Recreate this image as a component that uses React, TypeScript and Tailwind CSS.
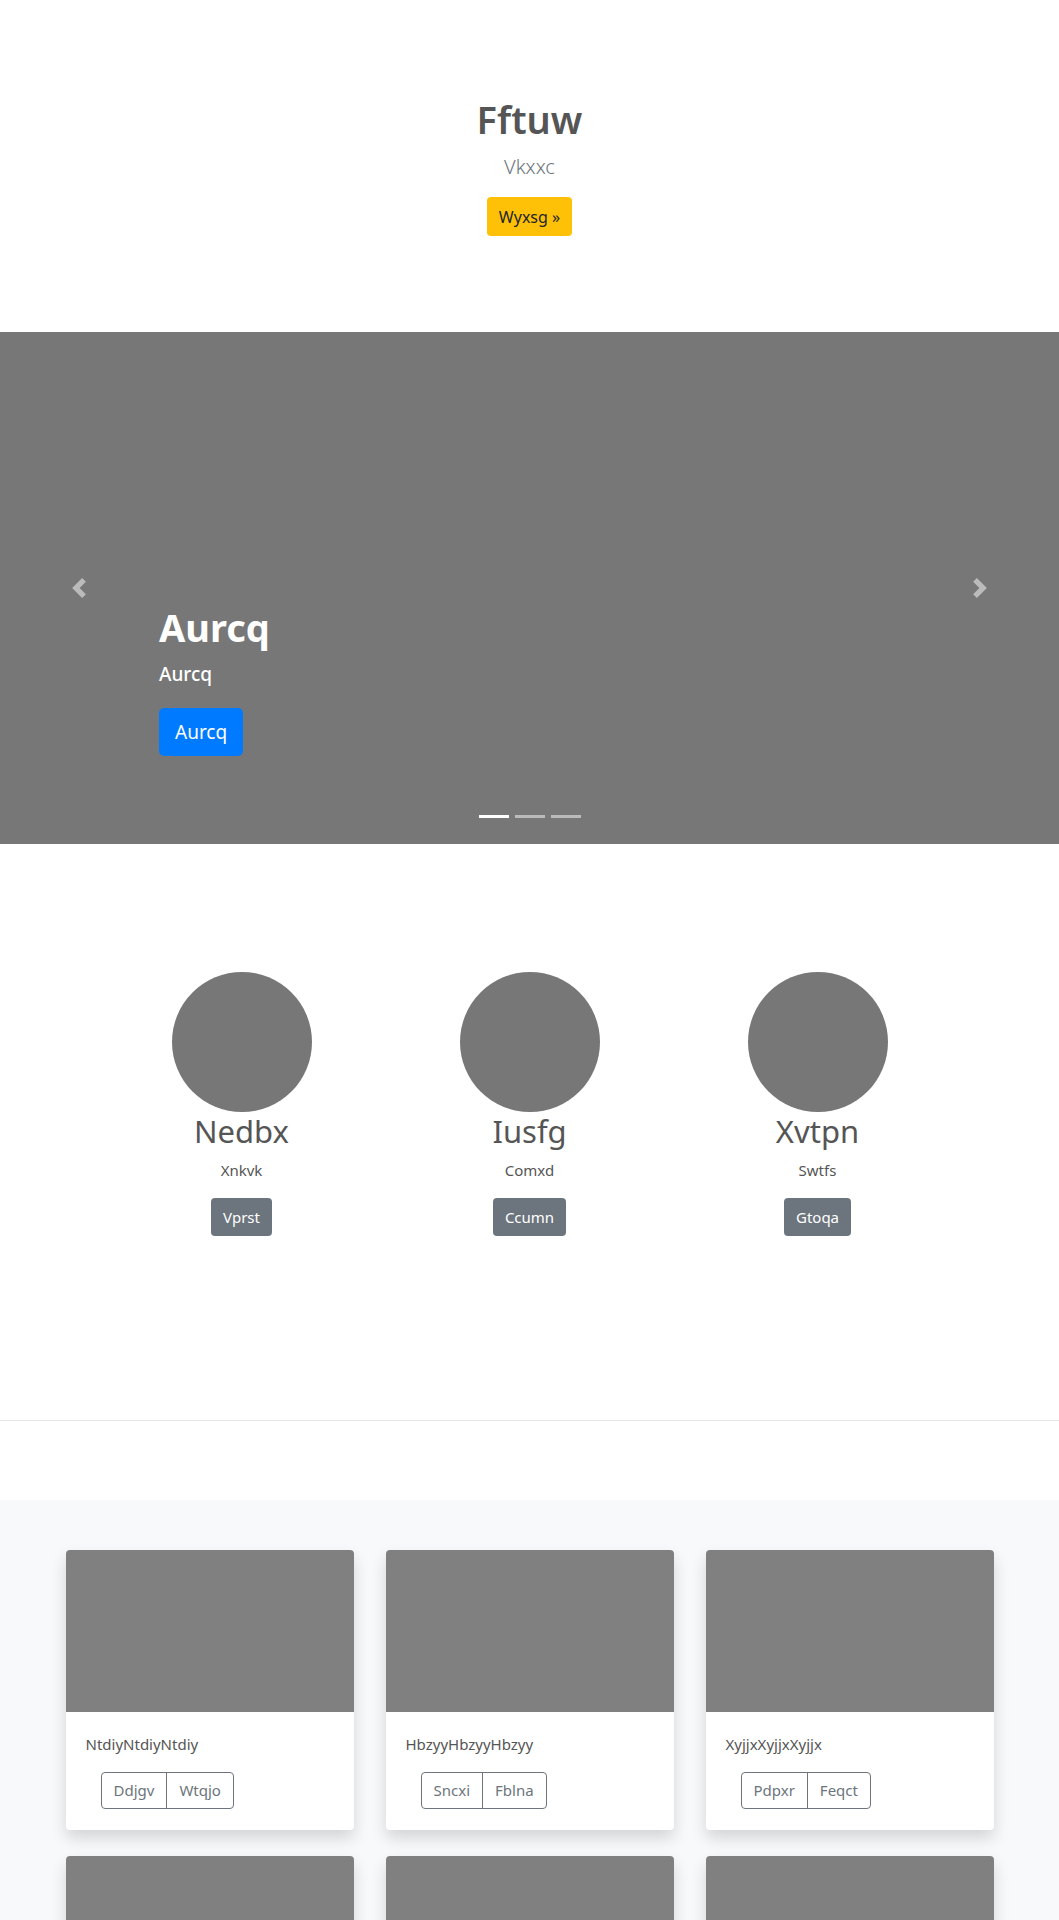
import React from "react";

const features = [
  { title: "Nedbx", text: "Xnkvk", btn: "Vprst" },
  { title: "Iusfg", text: "Comxd", btn: "Ccumn" },
  { title: "Xvtpn", text: "Swtfs", btn: "Gtoqa" },
];

const cards = [
  { text: "NtdiyNtdiyNtdiy", a: "Ddjgv", b: "Wtqjo" },
  { text: "HbzyyHbzyyHbzyy", a: "Sncxi", b: "Fblna" },
  { text: "XyjjxXyjjxXyjjx", a: "Pdpxr", b: "Feqct" },
  { text: "QmrtkQmrtkQmrtk", a: "Lovbe", b: "Rydzu" },
  { text: "GawefGawefGawef", a: "Tnhol", b: "Ksiwp" },
  { text: "UbcmyUbcmyUbcmy", a: "Zfaqi", b: "Hexor" },
];

export default function App() {
  return (
    <div className="font-['Noto_Sans',sans-serif] bg-white text-[#555]">
      {/* Hero */}
      <section className="h-[332px] flex flex-col items-center pt-[95px]">
        <h1 className="text-[38px] leading-[48px] font-semibold text-[#555]">Fftuw</h1>
        <p className="mt-[9px] text-[20px] leading-[30px] font-light text-[#6c757d]">Vkxxc</p>
        <button className="mt-[15px] h-[39px] px-3 rounded-[4px] bg-[#ffc107] text-[#212529] text-[16px]">
          Wyxsg »
        </button>
      </section>

      {/* Carousel */}
      <section className="relative h-[512px] bg-[#777] flex flex-col justify-end items-start pl-[159px] pb-[88px]">
        <h1 className="text-[38px] leading-[48px] font-bold text-white">Aurcq</h1>
        <p className="mt-[8px] text-[19px] leading-[30px] font-medium text-white">Aurcq</p>
        <button className="mt-[19px] h-[48px] px-4 rounded-[5px] bg-[#007bff] text-white text-[19px]">
          Aurcq
        </button>

        <div className="absolute top-0 bottom-0 left-0 w-[15%] flex items-center justify-center">
          <svg width="20" height="20" viewBox="0 0 8 8" className="opacity-50">
            <path fill="#fff" d="M5.25 0l-4 4 4 4 1.5-1.5L4.25 4l2.5-2.5L5.25 0z" />
          </svg>
        </div>
        <div className="absolute top-0 bottom-0 right-0 w-[15%] flex items-center justify-center">
          <svg width="20" height="20" viewBox="0 0 8 8" className="opacity-50">
            <path fill="#fff" d="M2.75 0l-1.5 1.5L3.75 4l-2.5 2.5L2.75 8l4-4-4-4z" />
          </svg>
        </div>
        <div className="absolute left-0 right-0 bottom-[26px] flex justify-center gap-[6px]">
          <span className="block w-[30px] h-[3px] bg-white" />
          <span className="block w-[30px] h-[3px] bg-white/50" />
          <span className="block w-[30px] h-[3px] bg-white/50" />
        </div>
      </section>

      {/* Marketing */}
      <section className="pt-[128px] pb-[184px]">
        <div className="w-[864px] mx-auto grid grid-cols-3">
          {features.map((f) => (
            <div key={f.title} className="flex flex-col items-center">
              <div className="w-[140px] h-[140px] rounded-full bg-[#777]" />
              <h2 className="text-[31px] leading-[38px] font-normal text-[#555]">{f.title}</h2>
              <p className="mt-[8px] text-[15px] leading-[24px] text-[#555]">{f.text}</p>
              <button className="mt-[16px] h-[38px] px-3 rounded-[4px] bg-[#6c757d] text-white text-[15px]">
                {f.btn}
              </button>
            </div>
          ))}
        </div>
      </section>

      <hr className="border-0 border-t border-[#e5e5e5]" />

      <div className="h-[79px]" />

      {/* Album */}
      <section className="bg-[#f8f9fa] pt-[50px] pb-[48px]">
        <div className="w-[960px] mx-auto px-4 grid grid-cols-3 gap-x-8 gap-y-[26px]">
          {cards.map((c) => (
            <div
              key={c.text}
              className="bg-white rounded-[4px] overflow-hidden shadow-[0_0.5rem_1rem_rgba(0,0,0,0.15)]"
            >
              <div className="h-[162px] bg-[#808080]" />
              <div className="px-5 pt-5 pb-[21px]">
                <p className="text-[15px] leading-[24px] text-[#555]">{c.text}</p>
                <div className="mt-4 ml-[15px] inline-flex h-[37px] rounded-[4px] border border-[#6c757d] text-[#6c757d] text-[15px]">
                  <span className="px-3 flex items-center border-r border-[#6c757d]">{c.a}</span>
                  <span className="px-3 flex items-center">{c.b}</span>
                </div>
              </div>
            </div>
          ))}
        </div>
      </section>
    </div>
  );
}
